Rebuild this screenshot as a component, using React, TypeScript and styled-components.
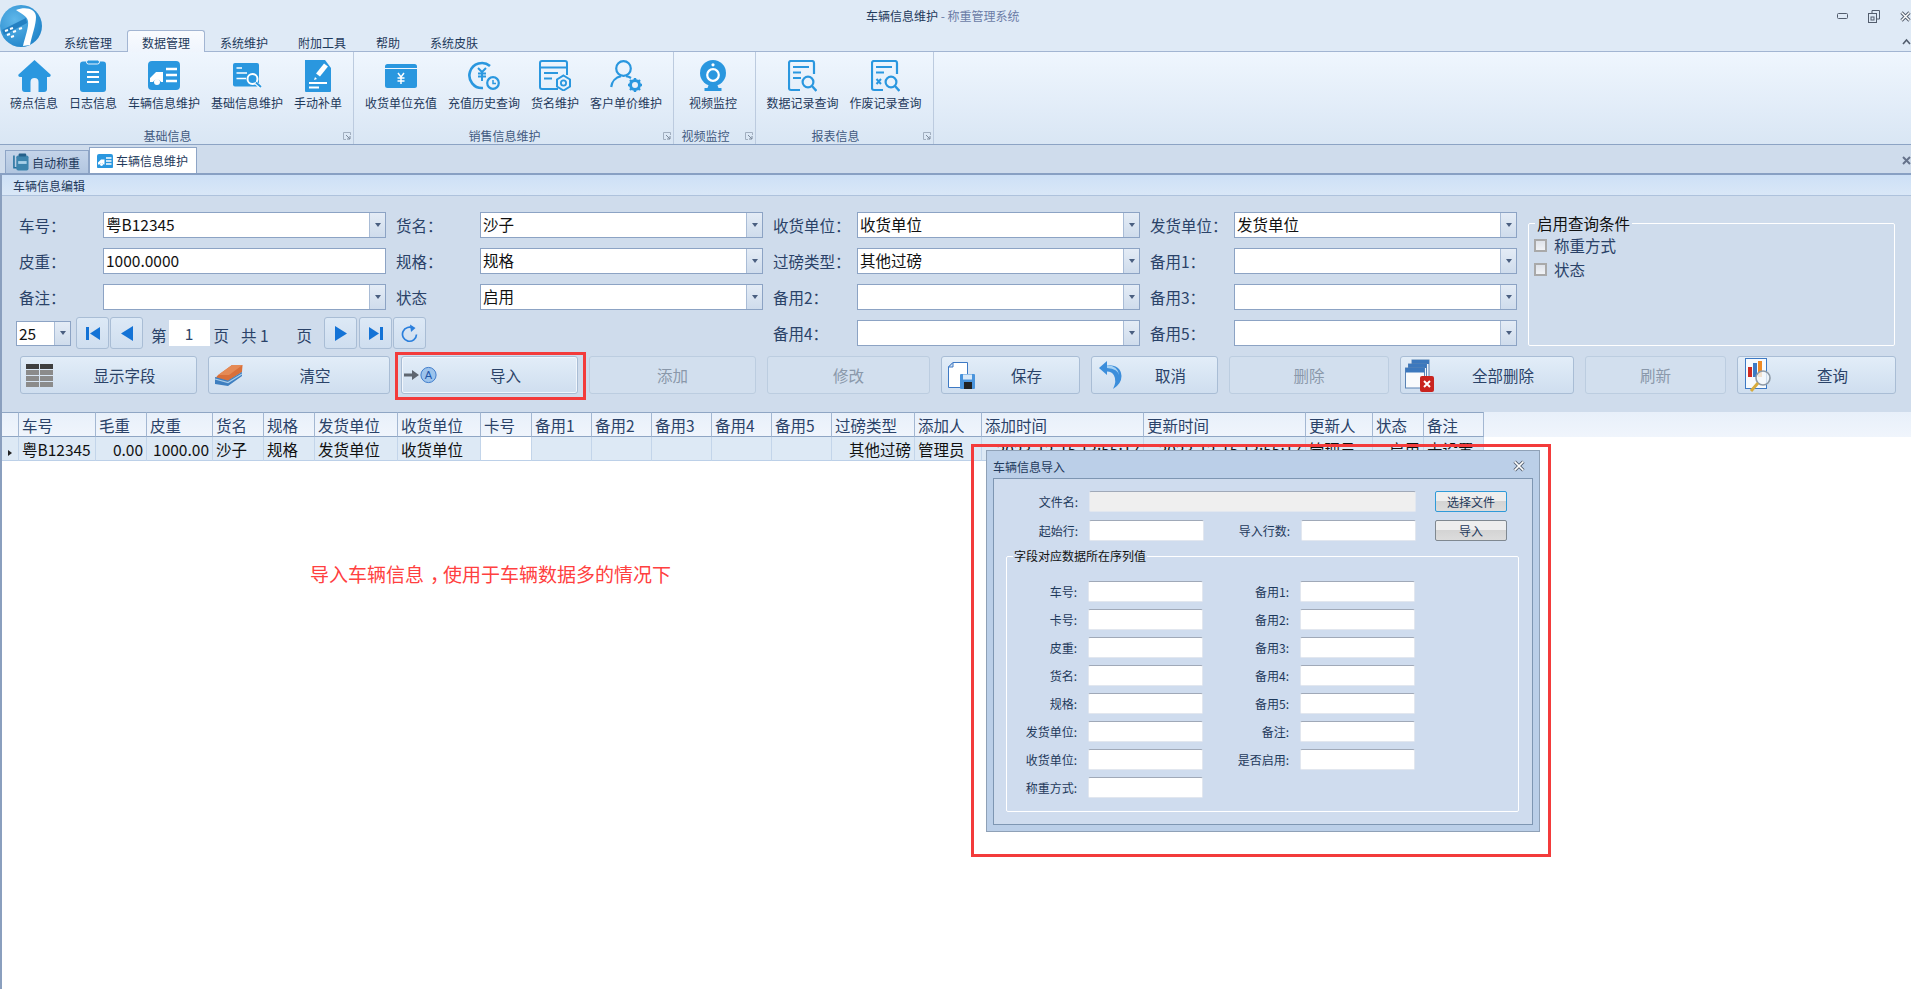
import React from "react";
import styled, { createGlobalStyle } from "styled-components";

const BLUE = "#2a97df";
const INK = "#1e395b";

const GlobalStyle = createGlobalStyle`
  html, body {
    margin: 0;
    padding: 0;
    background: #fff;
    overflow: hidden;
  }
  * {
    box-sizing: border-box;
  }
  body {
    font-family: "Noto Sans CJK SC", "Liberation Sans", sans-serif;
    color: ${INK};
  }
`;

const Shell = styled.div`
  position: relative;
  width: 1911px;
  height: 989px;
  display: flex;
  flex-direction: column;
  overflow: hidden;
  background: #fff;
`;

const LogoMark = styled.div`
  position: absolute;
  left: -1px;
  top: 4px;
  width: 44px;
  height: 44px;
`;

const TitleBar = styled.div`
  height: 30px;
  display: grid;
  grid-template-columns: 866px auto 1fr;
  align-items: center;
  background: #dfeaf6;
  font-size: 12px;
  line-height: 16px;
`;

const TitleText = styled.div`
  white-space: nowrap;
  grid-column: 2;
  margin-top: 2px;
`;

const TitleApp = styled.span`
  color: #6b7ca6;
`;

const WindowButtons = styled.div`
  display: flex;
  align-items: center;
  justify-content: flex-end;
  gap: 20px;
  margin-top: 2px;
`;

const TabRow = styled.div`
  height: 22px;
  display: flex;
  justify-content: space-between;
  padding-left: 49px;
  background: #dfeaf6;
  border-bottom: 1px solid #a2b5d2;
`;

const MenuTabs = styled.div`
  display: flex;
`;

const MenuTab = styled.div<{ $active?: boolean }>`
  height: ${(p) => (p.$active ? "22px" : "21px")};
  padding: 3px 14px 0;
  border: 1px solid ${(p) => (p.$active ? "#a2b5d2" : "transparent")};
  border-bottom: 0;
  border-radius: 3px 3px 0 0;
  background: ${(p) => (p.$active ? "linear-gradient(#f9fbfe, #eff5fd)" : "transparent")};
  font-size: 12px;
  line-height: 18px;
  white-space: nowrap;
  color: ${INK};
  z-index: 1;
`;

const Collapse = styled.div`
  display: flex;
  align-items: center;
  height: 21px;
  margin-top: 1px;
`;

const Ribbon = styled.div`
  height: 93px;
  display: flex;
  background: linear-gradient(#eff6fe, #d9e6f4);
  border-bottom: 1px solid #8ca3c4;
`;

const RibbonGroup = styled.div<{ $w: number; $pad: number }>`
  width: ${(p) => p.$w}px;
  padding-left: ${(p) => p.$pad}px;
  padding-top: 7px;
  display: flex;
  flex-direction: column;
  border-right: 1px solid #bccbdf;
`;

const RibbonItems = styled.div`
  display: flex;
  flex: 1;
`;

const RibbonItem = styled.div`
  padding: 0 5.5px;
  display: flex;
  flex-direction: column;
  align-items: center;
`;

const RibbonIcon = styled.div`
  height: 33px;
  display: flex;
  align-items: center;
  justify-content: center;
`;

const RibbonLabel = styled.div`
  margin-top: 3px;
  font-size: 12px;
  line-height: 16px;
  white-space: nowrap;
`;

const GroupFooter = styled.div<{ $pad: number }>`
  height: 16px;
  margin-left: -${(p) => p.$pad}px;
  display: flex;
  align-items: center;
`;

const GroupName = styled.div`
  flex: 1;
  text-align: center;
  font-size: 12px;
  line-height: 16px;
  color: #425a80;
  white-space: nowrap;
`;

const Launcher = styled.div`
  width: 18px;
  padding-right: 2px;
  display: flex;
  justify-content: flex-end;
`;

const DocTabs = styled.div`
  height: 30px;
  display: flex;
  justify-content: space-between;
  align-items: flex-end;
  padding-left: 5px;
  background: #cfdcec;
  border-bottom: 2px solid #88a0c3;
`;

const DocTabList = styled.div`
  display: flex;
  align-items: flex-end;
`;

const DocTab = styled.div<{ $active?: boolean }>`
  height: ${(p) => (p.$active ? "26px" : "23px")};
  display: flex;
  align-items: center;
  gap: 3px;
  padding: 1px 8px 0 7px;
  border: 1px solid #8ea5c6;
  border-bottom: 0;
  background: ${(p) => (p.$active ? "#fff" : "linear-gradient(#c4d4e9, #b2c6e0)")};
  font-size: 12px;
  line-height: 16px;
  white-space: nowrap;
`;

const DocClose = styled.div`
  align-self: center;
  margin-bottom: -2px;
  display: flex;
`;

const Main = styled.div`
  flex: 1;
  display: flex;
  flex-direction: column;
  border-left: 2px solid #8a9fbe;
`;

const EditorPanel = styled.div`
  background: #cfdcec;
`;

const PanelHeader = styled.div`
  height: 21px;
  padding-left: 11px;
  background: linear-gradient(#cde0f6, #d9e7f7);
  border-bottom: 1px solid #aec2dc;
  font-size: 12px;
  line-height: 22px;
`;

const FormGrid = styled.div`
  padding: 16px 0 0 7px;
  display: grid;
  grid-template-columns: 94px 283px 94px 283px 94px 283px 94px 283px 378px;
  grid-template-rows: repeat(4, 26px);
  row-gap: 10px;
  align-items: center;
`;

const FieldLabel = styled.div`
  padding-left: 10px;
  font-size: 15.5px;
  line-height: 20px;
  color: #2a4268;
  white-space: nowrap;
`;

const Field = styled.div`
  height: 26px;
  display: flex;
  background: #fff;
  border: 1px solid #8ca3c4;
`;

const FieldText = styled.div`
  flex: 1;
  padding-left: 2px;
  font-size: 15.5px;
  line-height: 23px;
  color: #111;
  white-space: nowrap;
`;

const Caret = styled.div`
  width: 16px;
  display: flex;
  align-items: center;
  justify-content: center;
  background: linear-gradient(#e4ecf6, #cfdcec);
  border-left: 1px solid #a9bcd6;
  &::after {
    content: "";
    border-left: 3.5px solid transparent;
    border-right: 3.5px solid transparent;
    border-top: 4px solid #4a5f80;
  }
`;

const Pager = styled.div`
  grid-column: 1 / span 4;
  height: 32px;
  margin-left: 7px;
  display: flex;
  align-items: center;
`;

const SizeCombo = styled(Field)`
  width: 55px;
  height: 25px;
  margin-right: 5px;
`;

const PagerButton = styled.div<{ $gap?: number }>`
  width: 33px;
  height: 32px;
  margin-left: ${(p) => p.$gap ?? 1}px;
  display: flex;
  align-items: center;
  justify-content: center;
  background: linear-gradient(#dde9f6, #cfdeef);
  border: 1px solid #a9bdd5;
  border-radius: 3px;
`;

const PagerText = styled.div<{ $gap: number }>`
  margin-left: ${(p) => p.$gap}px;
  margin-top: 4px;
  font-size: 15.5px;
  line-height: 20px;
  color: #2a4268;
  white-space: nowrap;
`;

const PageInput = styled.div`
  width: 41px;
  height: 26px;
  margin-left: 2px;
  background: #fff;
  text-align: center;
  font-size: 15.5px;
  line-height: 26px;
  color: #2a4268;
`;

const QueryBox = styled.fieldset`
  grid-column: 9;
  grid-row: 1 / span 4;
  align-self: stretch;
  margin: 1px 0 0 11px;
  padding: 0 0 0 5px;
  min-width: 0;
  border: 1px solid #fff;
  border-radius: 2px;
`;

const QueryLegend = styled.legend`
  margin-left: 1px;
  padding: 0 2px;
  font-size: 15.5px;
  line-height: 20px;
  color: #111;
`;

const QueryOption = styled.div`
  height: 24px;
  display: flex;
  align-items: center;
  gap: 7px;
  font-size: 15.5px;
  color: #2a4268;
`;

const CheckMark = styled.div`
  width: 13px;
  height: 13px;
  border: 2px solid #a9a9a9;
  background: linear-gradient(#dfe3ea, #f1f3f6);
`;

const ActionRow = styled.div`
  padding: 10px 0 18px 18px;
  display: flex;
  gap: 11px;
`;

const ActionButton = styled.div<{ $w: number; $off?: boolean }>`
  width: ${(p) => p.$w}px;
  height: 38px;
  display: flex;
  align-items: center;
  background: ${(p) => (p.$off ? "#d2dfee" : "linear-gradient(#e2edf8, #cfdeef)")};
  border: 1px solid ${(p) => (p.$off ? "#bccde0" : "#a9bdd5")};
  border-radius: 3px;
  font-size: 15.5px;
  color: ${(p) => (p.$off ? "#8a98aa" : "#2a4268")};
`;

const ImportButton = styled(ActionButton)`
  position: relative;
  box-shadow: inset 0 0 0 1px #f1f6fc;
  &::after {
    content: "";
    position: absolute;
    inset: -5px -9px -7px -7px;
    border: 3px solid #f33b3b;
    pointer-events: none;
  }
`;

const ActionIcon = styled.div<{ $inset: number }>`
  flex: 0 0 32px;
  width: 32px;
  padding-left: ${(p) => p.$inset - 1}px;
  display: flex;
  align-items: center;
  svg {
    flex-shrink: 0;
  }
`;

const ActionLabel = styled.div`
  flex: 1;
  text-align: center;
  white-space: nowrap;
`;

const GridWrap = styled.div`
  background: linear-gradient(#e8f0fa, #f0f5fc) top left / 100% 25px no-repeat;
`;

const DataGrid = styled.table`
  table-layout: fixed;
  width: 1482px;
  border-collapse: separate;
  border-spacing: 0;
  font-size: 15.5px;
`;

const HeadCell = styled.th`
  height: 25px;
  padding: 0 0 0 3px;
  text-align: left;
  font-weight: 400;
  color: #2a4268;
  border-top: 1px solid #8fa6c4;
  border-bottom: 1px solid #8fa6c4;
  border-right: 1px solid #a3b7d2;
  white-space: nowrap;
  overflow: hidden;
`;

const BodyCell = styled.td<{ $end?: boolean; $blank?: boolean }>`
  height: 24px;
  padding: 0 3px;
  text-align: ${(p) => (p.$end ? "right" : "left")};
  color: #111;
  background: ${(p) => (p.$blank ? "#fff" : "#dde9f5")};
  border-bottom: 1px solid #bcd0e8;
  border-right: 1px solid #c3d5ea;
  white-space: nowrap;
  overflow: hidden;
  line-height: 22px;
`;

const RowMarker = styled(BodyCell)`
  padding: 0 0 0 6px;
  &::before {
    content: "";
    display: inline-block;
    border-top: 3.5px solid transparent;
    border-bottom: 3.5px solid transparent;
    border-left: 4px solid #222;
  }
`;

const BlankArea = styled.div`
  flex: 1;
  padding: 99px 0 0 308px;
  background: #fff;
`;

const Note = styled.div`
  font-size: 19px;
  line-height: 28px;
  color: #ff4040;
  white-space: nowrap;
`;

const NoteComma = styled.span`
  padding-left: 6px;
  letter-spacing: -6px;
`;

const ImportCallout = styled.div`
  position: absolute;
  left: 971px;
  top: 444px;
  width: 580px;
  height: 413px;
  padding: 3px 0 0 12px;
  border: 3px solid #f33b3b;
`;

const Dialog = styled.div`
  width: 554px;
  height: 382px;
  display: flex;
  flex-direction: column;
  padding: 0 6px 6px;
  background: #bbcfe8;
  border: 1px solid #8fa1b7;
`;

const DialogTitle = styled.div`
  height: 27px;
  display: flex;
  align-items: center;
  justify-content: space-between;
  padding-right: 8px;
  font-size: 12px;
  color: ${INK};
  padding-top: 3px;
`;

const DialogBody = styled.div`
  flex: 1;
  padding: 12px 0 0;
  background: #cfdcee;
  border: 1px solid #7e96b2;
`;

const FileGrid = styled.div`
  display: grid;
  grid-template-columns: 84px 115px 75px 115px 80px;
  grid-auto-rows: 21px;
  column-gap: 11px;
  row-gap: 8px;
  align-items: center;
`;

const SmallLabel = styled.div`
  text-align: right;
  font-size: 12px;
  line-height: 16px;
  color: ${INK};
  white-space: nowrap;
`;

const SmallInput = styled.div<{ $span?: number; $off?: boolean }>`
  grid-column: span ${(p) => p.$span ?? 1};
  height: 21px;
  background: ${(p) => (p.$off ? "#efefef" : "#fff")};
  border: 1px solid #e2e7ef;
  border-top-color: #a0a9b8;
  border-radius: 2px;
`;

const SmallButton = styled.div<{ $focus?: boolean }>`
  height: 21px;
  margin-left: 8px;
  width: 72px;
  text-align: center;
  font-size: 12px;
  line-height: 19px;
  color: ${INK};
  background: linear-gradient(#eeeeee 50%, #d4d4d4 50%, #dcdcdc);
  border: 1px solid ${(p) => (p.$focus ? "#2f9ad8" : "#7f8890")};
  border-radius: 2px;
`;

const MapBox = styled.fieldset`
  width: 513px;
  margin: 7px 0 0 12px;
  padding: 17px 0 13px 0;
  min-width: 0;
  border: 1px solid #fff;
  border-radius: 2px;
`;

const MapLegend = styled.legend`
  margin-left: 6px;
  padding: 0 1px;
  font-size: 12px;
  line-height: 16px;
  color: #111;
`;

const MapGrid = styled.div`
  display: grid;
  grid-template-columns: 70px 115px 75px 115px;
  grid-auto-rows: 21px;
  column-gap: 11px;
  row-gap: 7px;
  align-items: center;
`;

/* drawn icons */

const HomeIcon = () => (
  <svg width="33" height="32" viewBox="0 0 33 32">
    <path
      fill={BLUE}
      d="M16.5 0 32.5 14.5Q33.5 17 30 17H29V29Q29 32 26 32H20.5V22A4 4 0 0 0 12.5 22V32H7Q4 32 4 29V17H3Q-.5 17 .5 14.5Z"
    />
  </svg>
);

const ClipboardIcon = () => (
  <svg width="26" height="32" viewBox="0 0 26 32">
    <rect y="1.5" width="26" height="30.5" rx="3" fill={BLUE} />
    <rect x="6.5" y="0" width="13" height="4" rx="2" fill={BLUE} stroke="#eaf3fc" strokeWidth="1" />
    <path d="M7 12H19M7 17H19M7 22H19" stroke="#fff" strokeWidth="2" />
  </svg>
);

const CarIcon = ({ size = 32 }: { size?: number }) => (
  <svg width={size} height={size * 0.906} viewBox="0 0 32 29">
    <rect width="32" height="29" rx="4" fill={BLUE} />
    <path d="M2 17 8 11H15V21H13A4.5 4.5 0 0 0 5 21H2Z" fill="#fff" />
    <circle cx="9" cy="21" r="3" fill="#fff" />
    <path d="M18 8H29M18 14H29M18 20H29" stroke="#fff" strokeWidth="2.6" />
  </svg>
);

const ToolCardIcon = () => (
  <svg width="29" height="25" viewBox="0 0 29 25">
    <rect width="26" height="23.5" rx="2" fill={BLUE} />
    <path d="M3.5 5H9M3.5 10H14M3.5 15.5H13" stroke="#fff" strokeWidth="1.7" />
    <circle cx="19.5" cy="16" r="5" fill={BLUE} stroke="#fff" strokeWidth="2" />
    <path d="M23 20 28 24.5" stroke="#fff" strokeWidth="3.4" />
    <path d="M23 19.5 28 24" stroke={BLUE} strokeWidth="2" />
  </svg>
);

const PencilIcon = () => (
  <svg width="26" height="32" viewBox="0 0 26 32">
    <path fill={BLUE} d="M0 0H26V31A1 1 0 0 1 25 32H1A1 1 0 0 1 0 31Z" />
    <path fill="#eff5fd" d="M20 0H26V8Z" />
    <path d="M21 5 13 15" stroke="#fff" strokeWidth="5" />
    <path d="M10 17 9 20 12 19Z" fill="#fff" />
    <path d="M4 23H22M4 27.5H14" stroke="#fff" strokeWidth="2" />
  </svg>
);

const YuanCardIcon = () => (
  <svg width="32" height="24" viewBox="0 0 32 24">
    <rect width="32" height="24" rx="2.5" fill={BLUE} />
    <path d="M0 4.5H32" stroke="#eff5fd" strokeWidth="1" />
    <path d="M13 9 16 13 19 9M16 13V20M12.5 14H19.5M12.5 17H19.5" stroke="#fff" strokeWidth="1.5" fill="none" />
  </svg>
);

const HistoryIcon = () => (
  <svg width="32" height="30" viewBox="0 0 32 30" fill="none">
    <path d="M22 5A12.5 12.5 0 1 0 15 27" stroke={BLUE} strokeWidth="2.6" />
    <path d="M10 7 14 11 18 7M14 11V20M10 12.5H18M10 15.5H18" stroke={BLUE} strokeWidth="2" />
    <circle cx="25" cy="22" r="5.8" fill="#eaf2fb" stroke={BLUE} strokeWidth="2.2" />
    <path d="M25 19V22.5H28" stroke={BLUE} strokeWidth="1.5" />
  </svg>
);

const GoodsIcon = () => (
  <svg width="32" height="31" viewBox="0 0 32 31" fill="none">
    <path d="M19 29H3A2 2 0 0 1 1 27V3A2 2 0 0 1 3 1H26A2 2 0 0 1 28 3V15" stroke={BLUE} strokeWidth="2" />
    <path d="M1 7.5H28" stroke={BLUE} strokeWidth="2" />
    <path d="M5 13H19M5 18.5H13" stroke={BLUE} strokeWidth="1.8" />
    <path d="M24.5 15.5 31 19.5V26.5L24.5 30.5 18 26.5V19.5Z" fill="#eaf2fb" stroke={BLUE} strokeWidth="2" />
    <circle cx="24.5" cy="23" r="2.6" stroke={BLUE} strokeWidth="1.8" />
  </svg>
);

const CustomerIcon = () => (
  <svg width="32" height="32" viewBox="0 0 32 32" fill="none">
    <circle cx="13.5" cy="8.5" r="7.3" stroke={BLUE} strokeWidth="2.2" />
    <path d="M1.2 27A12.5 12.5 0 0 1 11 16.2M16 16.2A12 12 0 0 1 21 18" stroke={BLUE} strokeWidth="2.2" />
    <circle cx="25" cy="25" r="4.5" stroke={BLUE} strokeWidth="3" />
    <path
      d="M25 18V20.5M25 29.5V32M18 25H20.5M29.5 25H32M20 20 21.8 21.8M28.2 28.2 30 30M30 20 28.2 21.8M21.8 28.2 20 30"
      stroke={BLUE}
      strokeWidth="2.4"
    />
  </svg>
);

const WebcamIcon = () => (
  <svg width="26" height="31" viewBox="0 0 26 31" fill="none">
    <circle cx="13" cy="13" r="13" fill={BLUE} />
    <circle cx="13" cy="15" r="5.8" stroke="#fff" strokeWidth="2.2" />
    <circle cx="13" cy="4.8" r="1.6" fill="#fff" />
    <path d="M9 24H17L18.5 28H21.5V31H4.5V28H7.5Z" fill={BLUE} />
  </svg>
);

const RecordIcon = ({ cross }: { cross?: boolean }) => (
  <svg width="29" height="32" viewBox="0 0 29 32" fill="none">
    <path d="M12 30H3A2 2 0 0 1 1 28V3A2 2 0 0 1 3 1H24A2 2 0 0 1 26 3V14" stroke={BLUE} strokeWidth="2.2" />
    <path d="M5 7H21M5 12.5H13" stroke={BLUE} strokeWidth="2" />
    {cross ? (
      <path d="M5.5 19 10 24M10 19 5.5 24" stroke={BLUE} strokeWidth="2" />
    ) : (
      <path d="M5 18H13" stroke={BLUE} strokeWidth="2" />
    )}
    <circle cx="20" cy="22" r="5.4" fill="#eaf2fb" stroke={BLUE} strokeWidth="2.2" />
    <path d="M24 26 28.4 31" stroke={BLUE} strokeWidth="2.4" />
  </svg>
);

const ScaleTabIcon = () => (
  <svg width="16" height="19" viewBox="0 0 17 19">
    <path d="M1 2V15H5" stroke="#1f6e9c" strokeWidth="1.6" fill="none" />
    <rect x="3.5" y="2" width="13" height="16" rx="2" fill="#3d84ad" />
    <rect x="6" y="0" width="8" height="3" rx="1" fill="#25608a" />
    <rect x="5.5" y="8" width="9" height="3" fill="#a9d0e8" />
  </svg>
);

const Launch = () => (
  <svg width="8" height="8" viewBox="0 0 8 8" fill="none">
    <path d="M7.5 3V.5H.5V7.5H3" stroke="#a1aebf" />
    <path d="M3 3 7 7M7 4V7H4" stroke="#7d8a9c" />
  </svg>
);

const HollowX = ({ size = 11 }: { size?: number }) => (
  <svg width={size} height={size} viewBox="0 0 11 11" fill="none">
    <path d="M1.5 1.5 9.5 9.5M9.5 1.5 1.5 9.5" stroke="#525d6d" strokeWidth="3.2" />
    <path d="M1.5 1.5 9.5 9.5M9.5 1.5 1.5 9.5" stroke="#fff" strokeWidth="1.4" />
  </svg>
);

const Triangle = ({ left, bar }: { left?: boolean; bar?: boolean }) => (
  <svg width="14" height="15" viewBox="0 0 14 15">
    <g transform={left ? "translate(14 0) scale(-1 1)" : undefined}>
      <path d={bar ? "M0 1 10 7.5 0 14Z" : "M1 0 13 7.5 1 15Z"} fill="#1473d6" />
      {bar && <rect x="11" y="1" width="3" height="13" fill="#1473d6" />}
    </g>
  </svg>
);

const ReloadIcon = () => (
  <svg width="17" height="19" viewBox="0 0 17 19" fill="none">
    <path d="M12.5 4.5A7 7 0 1 0 15.5 10.5" stroke="#2b7fdc" strokeWidth="1.7" />
    <path d="M9 .5 14.5 4 10 8Z" fill="#2b7fdc" />
  </svg>
);

const GridGlyph = () => (
  <svg width="27" height="23" viewBox="0 0 27 23">
    <rect width="13" height="5" fill="#3f3f3f" />
    <rect x="14" width="13" height="5" fill="#3f3f3f" />
    {[6, 12, 18].map((y) => (
      <g key={y}>
        <rect y={y} width="13" height="5" fill="#8b8b8b" />
        <rect x="14" y={y} width="13" height="5" fill="#8b8b8b" />
      </g>
    ))}
  </svg>
);

const EraserGlyph = () => (
  <svg width="29" height="23" viewBox="0 0 29 23">
    <path d="M3 12 18 1H28.5L28 8 14 17 2 14Z" fill="#d9703a" />
    <path d="M18 1H28.5L15 11H4Z" fill="#e58a55" />
    <path d="M1 13 14 16.5 28 8V12L14 22 1 20Z" fill="#3f7fc0" />
    <path d="M1 15 14 18.5 28 10" stroke="#a9cdea" strokeWidth="1.2" fill="none" />
  </svg>
);

const ImportGlyph = () => (
  <svg width="33" height="18" viewBox="0 0 33 18">
    <path d="M0 7.5H8V4L15 9 8 14V10.5H0Z" fill="#5f6670" />
    <circle cx="24.5" cy="9" r="7.6" fill="#9cc3ec" stroke="#3f7ccb" />
    <text x="24.5" y="13" textAnchor="middle" fontSize="11" fill="#1f56a8" fontFamily="Liberation Sans">
      A
    </text>
  </svg>
);

const SaveGlyph = () => (
  <svg width="27" height="27" viewBox="0 0 27 27">
    <path d="M.5 5 5 .5H19.5V25.5H.5Z" fill="#fff" stroke="#3d79c4" />
    <path d="M.5 5H5V.5Z" fill="#d6e3f3" stroke="#3d79c4" />
    <rect x="12" y="12" width="15" height="15" rx="1" fill="#4a94dc" />
    <rect x="15" y="12.5" width="9" height="5" fill="#d9e9f8" />
    <rect x="16" y="20" width="8" height="7" fill="#222" />
  </svg>
);

const UndoGlyph = () => (
  <svg width="23" height="28" viewBox="0 0 23 28">
    <path d="M0 7 8 0V4Q22 4 22.5 15 22.5 23 14 28 18 20 15 14.5 13 10.5 8 10.5V14Z" fill="#3c8edb" />
    <path d="M8 4Q19 5 20 14 19 8 8 7Z" fill="#a8d2f3" />
  </svg>
);

const WindowsGlyph = () => (
  <svg width="29" height="33" viewBox="0 0 29 33">
    <rect x="7" y="1" width="17" height="20" fill="#f1f6fb" stroke="#5a83b4" />
    <rect x="7" y="1" width="17" height="4" fill="#3c78bd" />
    <rect x="3.5" y="5" width="18" height="20" fill="#f1f6fb" stroke="#5a83b4" />
    <rect x="3.5" y="5" width="18" height="4" fill="#3c78bd" />
    <rect x=".5" y="9" width="19" height="20" fill="#f8fafc" stroke="#5a83b4" />
    <rect x=".5" y="9" width="19" height="4.5" fill="#3c78bd" />
    <rect x="15" y="17" width="14" height="16" rx="2" fill="#c9241f" />
    <path d="M19 22 25 28M25 22 19 28" stroke="#fff" strokeWidth="2" />
  </svg>
);

const QueryGlyph = () => (
  <svg width="27" height="35" viewBox="0 0 27 35">
    <rect x=".5" y=".5" width="21" height="30" fill="#f7fafd" stroke="#3d79c4" />
    <rect x="3" y="9" width="4" height="10" fill="#cf2a22" />
    <rect x="8" y="5" width="4" height="14" fill="#3d79c4" />
    <rect x="13" y="3" width="4" height="16" fill="#ee8a24" />
    <circle cx="18" cy="20" r="7" fill="#f1f6fa" fillOpacity=".8" stroke="#8d99a6" strokeWidth="1.6" />
    <path d="M13 25 6 33" stroke="#d7ab3d" strokeWidth="3" />
  </svg>
);

const LogoArt = () => (
  <svg width="44" height="44" viewBox="0 0 44 44">
    <defs>
      <radialGradient id="lg" cx=".35" cy=".35" r=".8">
        <stop offset="0" stopColor="#5fb7ea" />
        <stop offset="1" stopColor="#1a7fc6" />
      </radialGradient>
    </defs>
    <circle cx="22" cy="22" r="21" fill="url(#lg)" />
    <path d="M17 6C27 2 37 5 37 13 37 21 33 31 31 41L24 42C26 33 30 23 29 17 28 12 23 10 17 6Z" fill="#fff" />
    <path d="M3 26 27 14 28 19 5 31Z" fill="#2480c2" />
    <path d="M6 27 9 26M11 25 14 24M8 31 11 30M14 28 17 27M12 33 15 32M20 25 23 24" stroke="#fff" strokeWidth="2" />
  </svg>
);

const MENU = ["系统管理", "数据管理", "系统维护", "附加工具", "帮助", "系统皮肤"];

const GROUPS = [
  {
    name: "基础信息",
    w: 354,
    pad: 4.5,
    items: [
      ["磅点信息", <HomeIcon />],
      ["日志信息", <ClipboardIcon />],
      ["车辆信息维护", <CarIcon />],
      ["基础信息维护", <ToolCardIcon />],
      ["手动补单", <PencilIcon />],
    ],
  },
  {
    name: "销售信息维护",
    w: 320,
    pad: 5.5,
    items: [
      ["收货单位充值", <YuanCardIcon />],
      ["充值历史查询", <HistoryIcon />],
      ["货名维护", <GoodsIcon />],
      ["客户单价维护", <CustomerIcon />],
    ],
  },
  { name: "视频监控", w: 82, pad: 9.5, items: [["视频监控", <WebcamIcon />]] },
  {
    name: "报表信息",
    w: 178,
    pad: 5,
    items: [
      ["数据记录查询", <RecordIcon />],
      ["作废记录查询", <RecordIcon cross />],
    ],
  },
] as const;

const FORM_FIELDS: [string, string, boolean][] = [
  ["车号：", "粤B12345", true],
  ["货名：", "沙子", true],
  ["收货单位：", "收货单位", true],
  ["发货单位：", "发货单位", true],
  ["皮重：", "1000.0000", false],
  ["规格：", "规格", true],
  ["过磅类型：", "其他过磅", true],
  ["备用1：", "", true],
  ["备注：", "", true],
  ["状态", "启用", true],
  ["备用2：", "", true],
  ["备用3：", "", true],
];

const COLUMNS: [string, number][] = [
  ["", 17],
  ["车号", 77],
  ["毛重", 51],
  ["皮重", 66],
  ["货名", 51],
  ["规格", 51],
  ["发货单位", 83],
  ["收货单位", 83],
  ["卡号", 51],
  ["备用1", 60],
  ["备用2", 60],
  ["备用3", 60],
  ["备用4", 60],
  ["备用5", 60],
  ["过磅类型", 83],
  ["添加人", 67],
  ["添加时间", 162],
  ["更新时间", 162],
  ["更新人", 67],
  ["状态", 51],
  ["备注", 60],
];

const ROW: [string, boolean?][] = [
  ["粤B12345"],
  ["0.00", true],
  ["1000.00", true],
  ["沙子"],
  ["规格"],
  ["发货单位"],
  ["收货单位"],
  [""],
  [""],
  [""],
  [""],
  [""],
  [""],
  ["其他过磅", true],
  ["管理员"],
  ["2023-12-15 13:55:17", true],
  ["2023-12-15 13:55:17", true],
  ["管理员"],
  ["启用", true],
  ["未设置"],
];

const MAP_ROWS = [
  ["车号:", "备用1:"],
  ["卡号:", "备用2:"],
  ["皮重:", "备用3:"],
  ["货名:", "备用4:"],
  ["规格:", "备用5:"],
  ["发货单位:", "备注:"],
  ["收货单位:", "是否启用:"],
  ["称重方式:", ""],
];

const FormField = ({ label, value, combo }: { label: string; value: string; combo: boolean }) => (
  <>
    <FieldLabel>{label}</FieldLabel>
    <Field>
      <FieldText>{value}</FieldText>
      {combo && <Caret />}
    </Field>
  </>
);

export default function App() {
  return (
    <Shell>
      <GlobalStyle />
      <LogoMark>
        <LogoArt />
      </LogoMark>

      <TitleBar>
        <TitleText>
          车辆信息维护 <TitleApp>- 称重管理系统</TitleApp>
        </TitleText>
        <WindowButtons>
          <svg width="11" height="6" viewBox="0 0 11 6" fill="none">
            <rect x=".5" y=".5" width="10" height="5" rx="1" stroke="#525d6d" />
          </svg>
          <svg width="12" height="13" viewBox="0 0 12 13" fill="none">
            <path d="M4 3V.5H11.5V9H8.5" stroke="#525d6d" />
            <rect x=".5" y="3.5" width="8" height="9" stroke="#525d6d" />
            <rect x="3" y="7" width="3" height="3" stroke="#525d6d" />
          </svg>
          <HollowX />
        </WindowButtons>
      </TitleBar>

      <TabRow>
        <MenuTabs>
          {MENU.map((m) => (
            <MenuTab key={m} $active={m === "数据管理"}>
              {m}
            </MenuTab>
          ))}
        </MenuTabs>
        <Collapse>
          <svg width="9" height="7" viewBox="0 0 9 7" fill="none">
            <path d="M1 6 4.5 2 8 6" stroke="#525d6d" strokeWidth="1.6" />
          </svg>
        </Collapse>
      </TabRow>

      <Ribbon>
        {GROUPS.map((g) => (
          <RibbonGroup key={g.name} $w={g.w} $pad={g.pad}>
            <RibbonItems>
              {g.items.map(([label, icon]) => (
                <RibbonItem key={label}>
                  <RibbonIcon>{icon}</RibbonIcon>
                  <RibbonLabel>{label}</RibbonLabel>
                </RibbonItem>
              ))}
            </RibbonItems>
            <GroupFooter $pad={g.pad}>
              <GroupName>{g.name}</GroupName>
              <Launcher>
                <Launch />
              </Launcher>
            </GroupFooter>
          </RibbonGroup>
        ))}
      </Ribbon>

      <DocTabs>
        <DocTabList>
          <DocTab>
            <ScaleTabIcon />
            自动称重
          </DocTab>
          <DocTab $active>
            <CarIcon size={16} />
            车辆信息维护
          </DocTab>
        </DocTabList>
        <DocClose>
          <svg width="9" height="9" viewBox="0 0 9 9" fill="none">
            <path d="M1 1 8 8M8 1 1 8" stroke="#65728a" strokeWidth="2" />
          </svg>
        </DocClose>
      </DocTabs>

      <Main>
        <EditorPanel>
          <PanelHeader>车辆信息编辑</PanelHeader>
          <FormGrid>
            <QueryBox>
              <QueryLegend>启用查询条件</QueryLegend>
              <QueryOption>
                <CheckMark />
                称重方式
              </QueryOption>
              <QueryOption>
                <CheckMark />
                状态
              </QueryOption>
            </QueryBox>
            {FORM_FIELDS.map(([label, value, combo]) => (
              <FormField key={label} label={label} value={value} combo={combo} />
            ))}
            <Pager>
              <SizeCombo>
                <FieldText>25</FieldText>
                <Caret />
              </SizeCombo>
              <PagerButton $gap={0}>
                <Triangle left bar />
              </PagerButton>
              <PagerButton>
                <Triangle left />
              </PagerButton>
              <PagerText $gap={8}>第</PagerText>
              <PageInput>1</PageInput>
              <PagerText $gap={4}>页</PagerText>
              <PagerText $gap={12}>共 1</PagerText>
              <PagerText $gap={28}>页</PagerText>
              <PagerButton $gap={12}>
                <Triangle />
              </PagerButton>
              <PagerButton $gap={2}>
                <Triangle bar />
              </PagerButton>
              <PagerButton>
                <ReloadIcon />
              </PagerButton>
            </Pager>
            <FormField label="备用4：" value="" combo />
            <FormField label="备用5：" value="" combo />
          </FormGrid>
          <ActionRow>
            <ActionButton $w={177}>
              <ActionIcon $inset={6}>
                <GridGlyph />
              </ActionIcon>
              <ActionLabel>显示字段</ActionLabel>
            </ActionButton>
            <ActionButton $w={182}>
              <ActionIcon $inset={6}>
                <EraserGlyph />
              </ActionIcon>
              <ActionLabel>清空</ActionLabel>
            </ActionButton>
            <ImportButton $w={177}>
              <ActionIcon $inset={3}>
                <ImportGlyph />
              </ActionIcon>
              <ActionLabel>导入</ActionLabel>
            </ImportButton>
            <ActionButton $w={167} $off>
              <ActionLabel>添加</ActionLabel>
            </ActionButton>
            <ActionButton $w={163} $off>
              <ActionLabel>修改</ActionLabel>
            </ActionButton>
            <ActionButton $w={139}>
              <ActionIcon $inset={7}>
                <SaveGlyph />
              </ActionIcon>
              <ActionLabel>保存</ActionLabel>
            </ActionButton>
            <ActionButton $w={127}>
              <ActionIcon $inset={8}>
                <UndoGlyph />
              </ActionIcon>
              <ActionLabel>取消</ActionLabel>
            </ActionButton>
            <ActionButton $w={160} $off>
              <ActionLabel>删除</ActionLabel>
            </ActionButton>
            <ActionButton $w={174}>
              <ActionIcon $inset={5}>
                <WindowsGlyph />
              </ActionIcon>
              <ActionLabel>全部删除</ActionLabel>
            </ActionButton>
            <ActionButton $w={141} $off>
              <ActionLabel>刷新</ActionLabel>
            </ActionButton>
            <ActionButton $w={159}>
              <ActionIcon $inset={8}>
                <QueryGlyph />
              </ActionIcon>
              <ActionLabel>查询</ActionLabel>
            </ActionButton>
          </ActionRow>
        </EditorPanel>

        <GridWrap>
          <DataGrid>
            <colgroup>
              {COLUMNS.map(([name, w]) => (
                <col key={name} width={w} />
              ))}
            </colgroup>
            <thead>
              <tr>
                {COLUMNS.map(([name]) => (
                  <HeadCell key={name}>{name}</HeadCell>
                ))}
              </tr>
            </thead>
            <tbody>
              <tr>
                <RowMarker />
                {ROW.map(([text, end], i) => (
                  <BodyCell key={i} $end={end} $blank={i === 7}>
                    {text}
                  </BodyCell>
                ))}
              </tr>
            </tbody>
          </DataGrid>
        </GridWrap>

        <BlankArea>
          <Note>
            导入车辆信息<NoteComma>，</NoteComma>使用于车辆数据多的情况下
          </Note>
        </BlankArea>
      </Main>

      <ImportCallout>
        <Dialog>
          <DialogTitle>
            车辆信息导入
            <HollowX size={12} />
          </DialogTitle>
          <DialogBody>
            <FileGrid>
              <SmallLabel>文件名:</SmallLabel>
              <SmallInput $span={3} $off />
              <SmallButton $focus>选择文件</SmallButton>
              <SmallLabel>起始行:</SmallLabel>
              <SmallInput />
              <SmallLabel>导入行数:</SmallLabel>
              <SmallInput />
              <SmallButton>导入</SmallButton>
            </FileGrid>
            <MapBox>
              <MapLegend>字段对应数据所在序列值</MapLegend>
              <MapGrid>
                {MAP_ROWS.map(([a, b]) => (
                  <React.Fragment key={a}>
                    <SmallLabel>{a}</SmallLabel>
                    <SmallInput />
                    {b && (
                      <>
                        <SmallLabel>{b}</SmallLabel>
                        <SmallInput />
                      </>
                    )}
                  </React.Fragment>
                ))}
              </MapGrid>
            </MapBox>
          </DialogBody>
        </Dialog>
      </ImportCallout>
    </Shell>
  );
}
